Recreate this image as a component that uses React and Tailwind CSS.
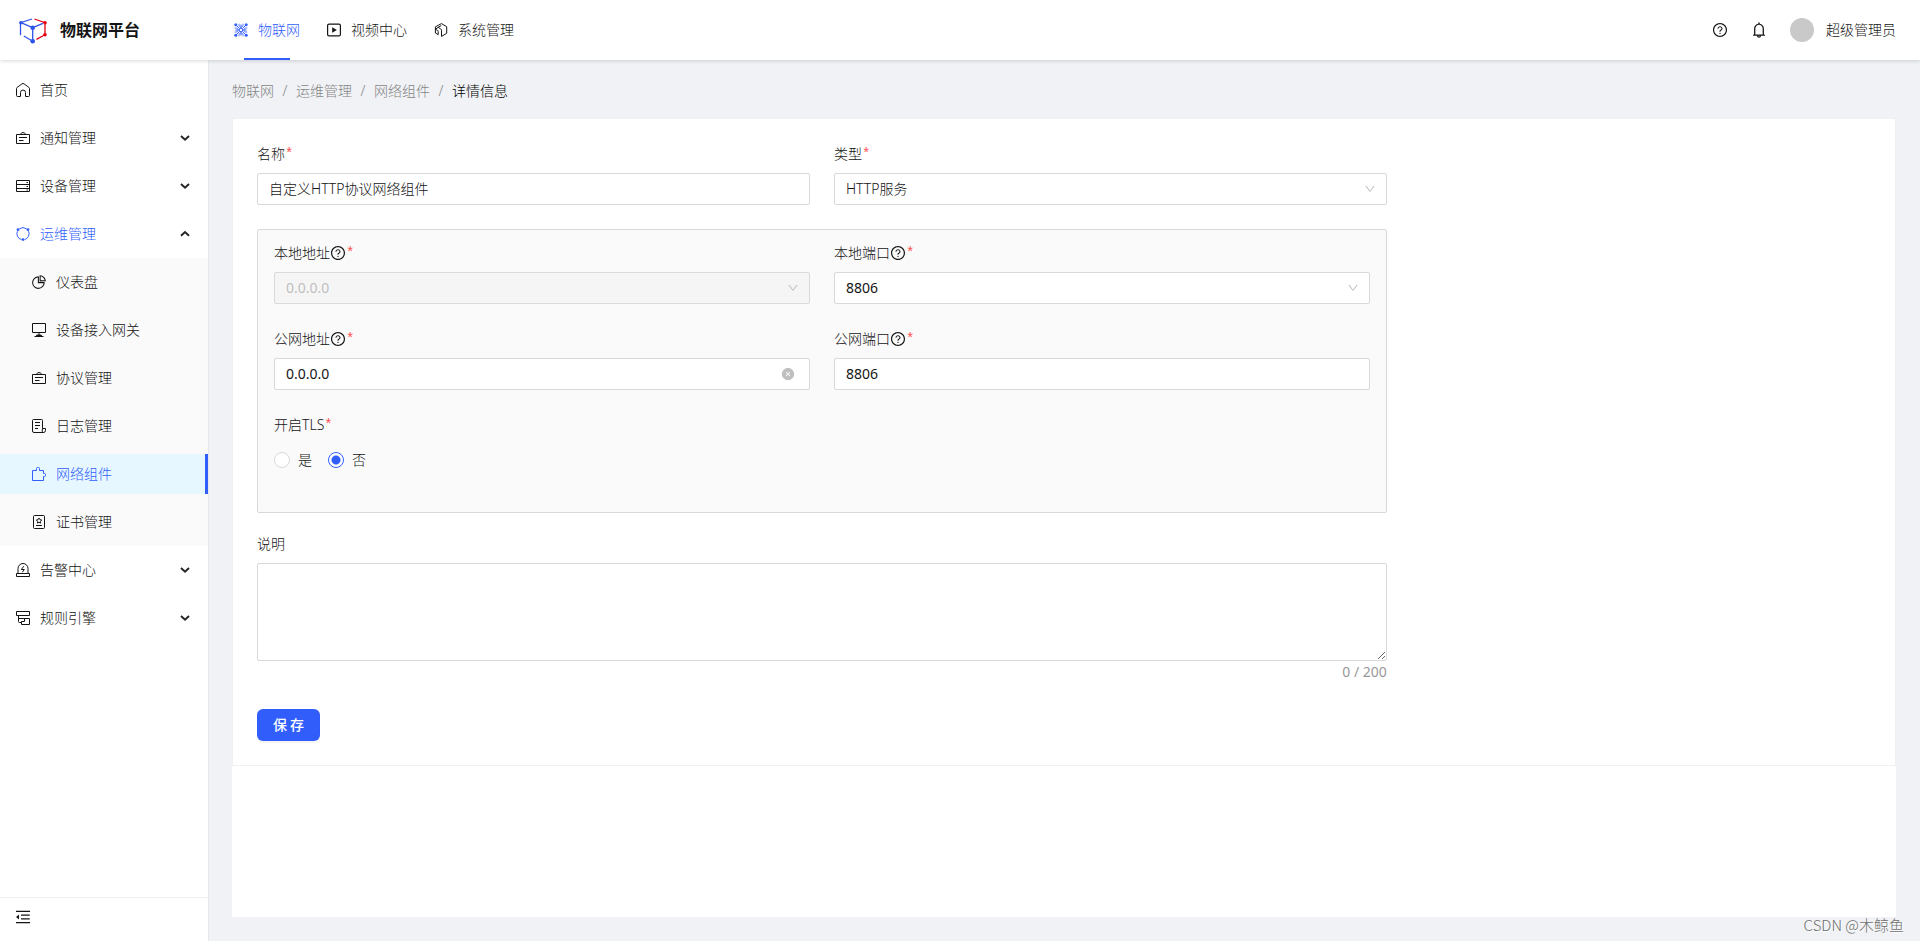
import { useState } from "react";
import {
  AiFillCloseCircle,
  AiOutlineBell,
  AiOutlineDown,
  AiOutlineMenuFold,
  AiOutlinePieChart,
  AiOutlineQuestionCircle,
} from "react-icons/ai";

function Icon({ children }) {
  return (
    <svg
      width="14"
      height="14"
      viewBox="0 0 14 14"
      fill="none"
      stroke="currentColor"
      strokeWidth="1"
      className="shrink-0"
      aria-hidden="true"
    >
      {children}
    </svg>
  );
}

const HomeIcon = () => (
  <Icon>
    <path d="M4.500 13.500H1.500a1 1 0 0 1-1-1V5.600a1.500 1.500 0 0 1 .6-1.200L5.900 .9a1.800 1.800 0 0 1 2.200 0l4.800 3.500a1.500 1.500 0 0 1 .6 1.200v6.900a1 1 0 0 1-1 1H9.500V9.500a2.500 2.500 0 0 0-5 0z" />
  </Icon>
);

const BadgeIcon = () => (
  <Icon>
    <path d="M.5 3.500h13v9H.5zM4.500 3.200L5.700 1.700h2.600l1.200 1.500M3 6.500h8M3 9.500h4.500" />
  </Icon>
);

const ServerIcon = () => (
  <Icon>
    <path d="M.5 1.500h13v11H.5zM.5 5.500h13M.5 9.500h13M10.500 3.500h1.500M10.500 7.500h1.500M10.500 11h1.500" />
  </Icon>
);

const OpsIcon = () => (
  <Icon>
    <path d="M3.300 1.900A6.200 6.200 0 0 1 10.700 1.900M12.600 4.200A6.200 6.200 0 0 1 8.600 12.600M5.400 12.600A6.200 6.200 0 0 1 1.400 4.200" />
    <g fill="currentColor" stroke="none">
      <circle cx="2" cy="2.700" r="1.400" />
      <circle cx="12" cy="2.700" r="1.400" />
      <circle cx="7" cy="12.600" r="1.400" />
    </g>
  </Icon>
);

const PieIcon = () => <AiOutlinePieChart size={16} className="-m-px shrink-0" />;

const GatewayIcon = () => (
  <Icon>
    <path d="M.5 .5h13v9H.5zM7 9.500v2M2.500 13.500h9" />
    <path d="M4 13a3 1.800 0 0 1 6 0z" fill="currentColor" stroke="none" />
  </Icon>
);

const LogIcon = () => (
  <Icon>
    <path d="M10.500 9.500v-8a1 1 0 0 0-1-1h-8a1 1 0 0 0-1 1v10.500a1.500 1.500 0 0 0 1.500 1.500h9.500M10.500 9.500h3v2a2 2 0 0 1-2 2a1.300 1.300 0 0 1-1.300-1.300zM3 3.500h5M3 6.500h5M3 9.500h3" />
  </Icon>
);

const PuzzleIcon = () => (
  <Icon>
    <path d="M.5 3.500h4v-2a1 1 0 0 1 1-1h1a1 1 0 0 1 1 1v2h4v3h1a1 1 0 0 1 1 1v1a1 1 0 0 1-1 1h-1v4H.5z" />
  </Icon>
);

const CertIcon = () => (
  <Icon>
    <rect x="1.500" y=".5" width="11" height="13" rx="1" />
    <path d="M7 3l.9 1.600 1.800.4-1.300 1.300.2 1.800L7 7.400l-1.600.7.2-1.800L4.300 5l1.800-.4zM4 10.500h6" />
  </Icon>
);

const AlarmIcon = () => (
  <Icon>
    <path d="M.5 10.500h13v3H.5zM2 10.500V5.500a5 5 0 0 1 10 0v5" />
    <path d="M7.800 3.200L5.300 6.500h3L6.300 9.300" />
  </Icon>
);

const RuleIcon = () => (
  <Icon>
    <path d="M.5 .5h13v4H.5zM2.500 4.500v6a1 1 0 0 0 1 1h2M2.500 7.500h11v6h-8v-3h3v-3" />
  </Icon>
);

const IotIcon = () => (
  <Icon>
    <path d="M2 2l3.500 3.500M12 2L8.500 5.500M2 12l3.500-3.500M12 12L8.500 8.500M7 1.500v3M7 9.500v3M1.500 7h3M9.500 7h3" />
    <circle cx="7" cy="7" r="1.800" />
    <g fill="currentColor" stroke="none">
      <circle cx="1.800" cy="1.800" r="1.500" />
      <circle cx="12.200" cy="1.800" r="1.500" />
      <circle cx="1.800" cy="12.200" r="1.500" />
      <circle cx="12.200" cy="12.200" r="1.500" />
    </g>
    <path d="M5 .7v2.200L7 4.500l2-1.600V.7M5 13.300v-2.200l2-1.600 2 1.600v2.200M.7 5h2.200l1.600 2-1.600 2H.7M13.300 5h-2.200L9.500 7l1.600 2h2.200" strokeWidth=".8" />
  </Icon>
);

const VideoIcon = () => (
  <Icon>
    <rect x=".6" y="1.100" width="12.800" height="11.800" rx="1.500" strokeWidth="1.200" />
    <path d="M5.200 4.200v5.600L9.800 7z" fill="currentColor" stroke="none" />
  </Icon>
);

const SystemIcon = () => (
  <Icon>
    <path d="M4.200 2.300L7.500 .6l5.200 3.100v6.600l-5.200 3.100V7.200a1.500 1.500 0 0 0-.7-1.200L4.200 4.300 7.300 2.600M4.200 2.300L1.400 3.900v2.900M1.400 6.800v3.200l2.800 1.700V8.500a1.500 1.500 0 0 0-.7-1.200L1.400 6.300l2.800-2" />
  </Icon>
);

const Caret = ({ up }) => (
  <svg width="10" height="10" viewBox="0 0 10 10" fill="none" stroke="currentColor" strokeWidth="2" aria-hidden="true">
    <path d={up ? "M1 6.700L5 3l4 3.700" : "M1 3L5 6.700l4-3.700"} />
  </svg>
);

const Logo = () => (
  <svg width="32" height="32" viewBox="0 0 32 32" fill="none" strokeWidth="1.300" aria-hidden="true">
    <g stroke="#2f54eb">
      <path d="M16 5L4.500 8.700v12.600M5 8.700l11.700 5v13.600M7.800 22l8.900 5.300M16.700 13.700L27 9.300" />
    </g>
    <g stroke="#e60012">
      <path d="M18.400 5L29 8.700v12l-8.500 4.700" />
    </g>
    <g fill="#2f54eb">
      <circle cx="4.900" cy="8.700" r="1.800" />
      <circle cx="16.700" cy="13.700" r="2.300" />
      <circle cx="16.700" cy="27.300" r="2.300" />
    </g>
    <g fill="#e60012">
      <circle cx="29" cy="8.700" r="1.800" />
      <circle cx="29" cy="20.700" r="1.800" />
    </g>
  </svg>
);

const topNav = [
  { label: "物联网", icon: IotIcon, active: true },
  { label: "视频中心", icon: VideoIcon },
  { label: "系统管理", icon: SystemIcon },
];

const menu = [
  { label: "首页", icon: HomeIcon },
  { label: "通知管理", icon: BadgeIcon, group: true },
  { label: "设备管理", icon: ServerIcon, group: true },
  {
    label: "运维管理",
    icon: OpsIcon,
    group: true,
    open: true,
    children: [
      { label: "仪表盘", icon: PieIcon },
      { label: "设备接入网关", icon: GatewayIcon },
      { label: "协议管理", icon: BadgeIcon },
      { label: "日志管理", icon: LogIcon },
      { label: "网络组件", icon: PuzzleIcon, active: true },
      { label: "证书管理", icon: CertIcon },
    ],
  },
  { label: "告警中心", icon: AlarmIcon, group: true },
  { label: "规则引擎", icon: RuleIcon, group: true },
];

function Header() {
  return (
    <header className="z-10 flex h-15 shrink-0 items-center bg-white pr-6 pl-4 shadow-[0_1px_4px_rgba(0,21,41,0.16)]">
      <a href="#home" className="flex w-[218px] items-center gap-3">
        <Logo />
        <span className="text-base font-bold">物联网平台</span>
      </a>
      <nav className="flex h-full gap-[27px]">
        {topNav.map(({ label, icon: NavIcon, active }) => (
          <a
            key={label}
            href="#nav"
            className={`relative flex items-center gap-2.5 ${active ? "text-[#315efb]" : ""}`}
          >
            <NavIcon />
            {label}
            {active && <span className="absolute inset-x-2.5 bottom-0 h-0.5 bg-[#315efb]" />}
          </a>
        ))}
      </nav>
      <div className="ml-auto flex items-center gap-5.5">
        <button type="button" aria-label="帮助">
          <AiOutlineQuestionCircle size={16} />
        </button>
        <button type="button" aria-label="通知">
          <AiOutlineBell size={18} />
        </button>
        <button type="button" className="flex items-center gap-3">
          <span className="size-6 rounded-full bg-[#c9c9c9]" />
          超级管理员
        </button>
      </div>
    </header>
  );
}

function SubMenu({ items }) {
  return (
    <ul className="bg-[#fafafa]">
      {items.map(({ label, icon: ItemIcon, active }) => (
        <li key={label} className="py-1">
          <a
            href="#item"
            className={`flex h-10 items-center gap-2.5 border-r-3 pl-8 ${
              active ? "border-[#315efb] bg-[#e6f7ff] text-[#315efb]" : "border-transparent"
            }`}
          >
            <ItemIcon />
            {label}
          </a>
        </li>
      ))}
    </ul>
  );
}

function Sidebar() {
  return (
    <aside className="flex w-52 shrink-0 flex-col bg-white shadow-[1px_0_0_#e6e8ea]">
      <ul className="grow pt-1.5">
        {menu.map(({ label, icon: ItemIcon, group, open, children }) => (
          <li key={label}>
            <button
              type="button"
              aria-expanded={group ? Boolean(open) : undefined}
              className={`flex h-12 w-full items-center gap-2.5 pr-[18px] pl-4 ${open ? "text-[#315efb]" : ""}`}
            >
              <ItemIcon />
              {label}
              {group && (
                <span className="ml-auto text-[#262626]">
                  <Caret up={open} />
                </span>
              )}
            </button>
            {children && <SubMenu items={children} />}
          </li>
        ))}
      </ul>
      <button
        type="button"
        aria-label="收起菜单"
        className="flex h-11 items-center border-t border-[#f0f0f0] pb-1.5 pl-3.5"
      >
        <AiOutlineMenuFold size={18} />
      </button>
    </aside>
  );
}

function Breadcrumb() {
  const parents = ["物联网", "运维管理", "网络组件"];
  return (
    <nav aria-label="面包屑" className="text-[#858585]">
      <ol className="flex gap-2">
        {parents.map((name) => (
          <li key={name} className="flex gap-2">
            <a href="#crumb">{name}</a>
            <span className="w-1.5 text-center">/</span>
          </li>
        ))}
        <li className="text-black">详情信息</li>
      </ol>
    </nav>
  );
}

const Required = () => (
  <span className="font-['Liberation_Mono',monospace] font-normal text-[#ff4d4f]">*</span>
);

function Field({ id, label, help, required = true, children }) {
  return (
    <div className="flex flex-col gap-2">
      <label htmlFor={id} className="flex h-5.5 items-center">
        {label}
        {help && <AiOutlineQuestionCircle size={16} />}
        {required && <Required />}
      </label>
      {children}
    </div>
  );
}

const control =
  "h-8 w-full rounded-xs border border-[#d9d9d9] bg-white px-[11px] outline-none focus:border-[#315efb]";

function TextInput({ className = "", ...props }) {
  return <input className={`pb-0.5 ${control} ${className}`} {...props} />;
}

function SelectBox({ id, value, disabled, className = "" }) {
  return (
    <div className="relative">
      <select
        id={id}
        disabled={disabled}
        defaultValue={value}
        className={`appearance-none disabled:bg-[#f5f5f5] disabled:text-[#bfbfbf] disabled:opacity-100 ${control} ${className}`}
      >
        <option>{value}</option>
      </select>
      <AiOutlineDown size={12} className="pointer-events-none absolute top-2.5 right-[11px] text-[#bfbfbf]" />
    </div>
  );
}

function ClearableInput({ id, initial }) {
  const [value, setValue] = useState(initial);
  return (
    <div className="relative">
      <TextInput id={id} value={value} onChange={(e) => setValue(e.target.value)} className="font-normal" />
      <button
        type="button"
        aria-label="清空"
        onClick={() => setValue("")}
        className="absolute inset-y-0 right-[15px] text-[#bfbfbf]"
      >
        <AiFillCloseCircle size={14} />
      </button>
    </div>
  );
}

function RadioOption({ label, checked }) {
  return (
    <label className="flex items-center gap-2">
      <input
        type="radio"
        name="tls"
        defaultChecked={checked}
        className="size-4 appearance-none rounded-full border border-[#d9d9d9] bg-white checked:border-[#315efb] checked:bg-[radial-gradient(circle,#315efb_4px,white_5px)]"
      />
      {label}
    </label>
  );
}

function ComponentForm() {
  const [note, setNote] = useState("");
  return (
    <form className="w-[70%]" onSubmit={(e) => e.preventDefault()}>
      <div className="grid grid-cols-2 gap-6">
        <Field id="name" label="名称">
          <TextInput id="name" defaultValue="自定义HTTP协议网络组件" />
        </Field>
        <Field id="type" label="类型">
          <SelectBox id="type" value="HTTP服务" />
        </Field>
      </div>

      <div className="mt-6 grid grid-cols-2 gap-6 rounded-xs border border-[#d9d9d9] bg-[#fafafa] px-4 pt-3 pb-9">
        <Field id="local-host" label="本地地址" help>
          <SelectBox id="local-host" value="0.0.0.0" disabled className="font-normal" />
        </Field>
        <Field id="local-port" label="本地端口" help>
          <SelectBox id="local-port" value="8806" className="font-normal" />
        </Field>
        <Field id="public-host" label="公网地址" help>
          <ClearableInput id="public-host" initial="0.0.0.0" />
        </Field>
        <Field id="public-port" label="公网端口" help>
          <TextInput id="public-port" defaultValue="8806" className="font-normal" />
        </Field>
        <fieldset>
          <legend className="flex h-5.5 items-center">
            开启TLS
            <Required />
          </legend>
          <div className="mt-2 flex h-8 items-center gap-4">
            <RadioOption label="是" />
            <RadioOption label="否" checked />
          </div>
        </fieldset>
      </div>

      <div className="mt-5">
        <Field id="note" label="说明" required={false}>
          <textarea
            id="note"
            rows={4}
            maxLength={200}
            value={note}
            onChange={(e) => setNote(e.target.value)}
            className="block w-full resize rounded-xs border border-[#d9d9d9] bg-white px-[11px] py-1 outline-none focus:border-[#315efb]"
          />
        </Field>
        <p className="text-right font-normal text-[#999999]">{note.length} / 200</p>
      </div>

      <button
        type="submit"
        className="mt-6.5 flex h-8 items-center gap-[3px] rounded-md bg-[#315efb] px-4 font-medium text-white shadow-[0_2px_0_rgba(0,0,0,0.045)]"
      >
        <span>保</span>
        <span>存</span>
      </button>
    </form>
  );
}

export default function App() {
  return (
    <div className="relative flex min-h-screen flex-col bg-[#f0f2f5] font-['Noto_Sans','Noto_Sans_CJK_SC',sans-serif] text-sm/[22px] font-light text-[#141414]">
      <Header />
      <div className="flex grow">
        <Sidebar />
        <main className="flex grow flex-col px-6 pt-5 pb-6">
          <Breadcrumb />
          <div className="mt-4 grow bg-white">
            <section className="border border-[#f0f0f0] bg-white p-6">
              <ComponentForm />
            </section>
          </div>
        </main>
      </div>
      <span className="absolute right-4 bottom-1 font-['Noto_Sans_CJK_SC',sans-serif] text-[15px]/6 text-[#6f6f6f] [text-shadow:1px_1px_1px_white]">
        CSDN @木鲸鱼
      </span>
    </div>
  );
}
